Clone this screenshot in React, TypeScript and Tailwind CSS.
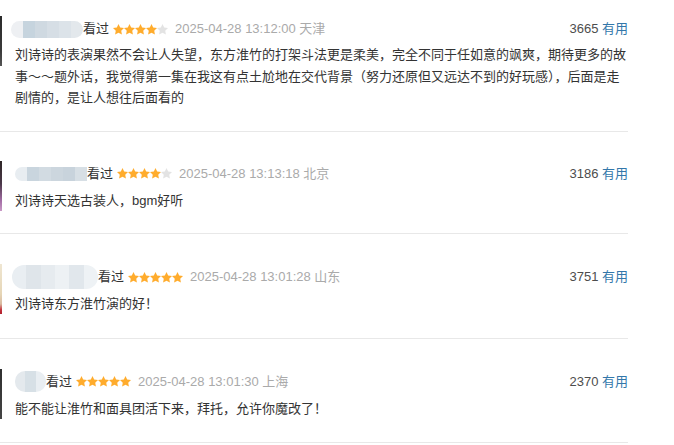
import React from "react";

type Row = {
  blob: { cls: string; colors: string[] };
  stars: number;
  date: string;
  loc: string;
  count: string;
  text: string;
  sliver: string;
  pad: string;
  mt: string;
};

const rows: Row[] = [
  {
    blob: {
      cls: "-ml-1 w-[72px] h-[17px] rounded-full",
      colors: ["#eef0f3", "#c6d4de", "#cfd9e1", "#d6dee5", "#dce3e9", "#e3e8ec"],
    },
    stars: 4,
    date: "2025-04-28 13:12:00",
    loc: "天津",
    count: "3665",
    text: "刘诗诗的表演果然不会让人失望，东方淮竹的打架斗法更是柔美，完全不同于任如意的飒爽，期待更多的故事～～题外话，我觉得第一集在我这有点土尬地在交代背景（努力还原但又远达不到的好玩感），后面是走剧情的，是让人想往后面看的",
    sliver: "bg-[linear-gradient(180deg,#2b2b2b_0%,#3a3a3a_70%,#555_100%)]",
    pad: "pt-[18px] pb-[22px]",
    mt: "mt-[4px]",
  },
  {
    blob: {
      cls: "w-[72px] h-[14px] rounded-l-full",
      colors: ["#e8edf1", "#c9d5de", "#d2dbe2", "#ccd6de", "#c8d3dc", "#d7dfe5"],
    },
    stars: 4,
    date: "2025-04-28 13:13:18",
    loc: "北京",
    count: "3186",
    text: "刘诗诗天选古装人，bgm好听",
    sliver: "bg-[linear-gradient(180deg,#2e2626_0%,#4a3848_45%,#a46ea6_80%,#c99ac6_100%)]",
    pad: "pt-[31px] pb-[22px]",
    mt: "mt-[5px]",
  },
  {
    blob: {
      cls: "-ml-[3px] w-[86px] h-[24px] rounded-full",
      colors: ["#e9eef2", "#dfe5ea", "#e6ebef", "#edf1f4", "#e1e7ec", "#eef2f5"],
    },
    stars: 5,
    date: "2025-04-28 13:01:28",
    loc: "山东",
    count: "3751",
    text: "刘诗诗东方淮竹演的好！",
    sliver: "bg-[linear-gradient(180deg,#efe6d2_0%,#e6d6b6_60%,#d9b9a0_80%,#c2303c_92%,#b0202c_100%)]",
    pad: "pt-[32px] pb-[23px]",
    mt: "mt-[5px]",
  },
  {
    blob: {
      cls: "w-[31px] h-[21px] rounded-[10px]",
      colors: ["#e4e9ed", "#d7e0e6", "#e9eef2"],
    },
    stars: 5,
    date: "2025-04-28 13:01:30",
    loc: "上海",
    count: "2370",
    text: "能不能让淮竹和面具团活下来，拜托，允许你魔改了！",
    sliver: "bg-[linear-gradient(180deg,#2f2f2f_0%,#444_100%)]",
    pad: "pt-[32px] pb-[23px]",
    mt: "mt-[5px]",
  },
];

function Star({ filled }: { filled: boolean }) {
  return (
    <svg width="11" height="11" viewBox="1.5 1.5 21 21" className="block">
      <path
        d="M12 1.5l3.2 6.6 7.3 1-5.3 5.1 1.3 7.2L12 18l-6.5 3.4 1.3-7.2L1.5 9.1l7.3-1z"
        fill={filled ? "#ffac2d" : "#e3e3e3"}
      />
    </svg>
  );
}

function Blob({ cls, colors }: { cls: string; colors: string[] }) {
  return (
    <div className={`flex shrink-0 overflow-hidden ${cls}`}>
      {colors.map((c, i) => (
        <div key={i} className="h-full flex-1" style={{ backgroundColor: c }} />
      ))}
    </div>
  );
}

export default function App() {
  return (
    <div className="min-h-[445px] w-[674px] bg-white font-[family-name:'Liberation_Sans','Noto_Sans_CJK_SC',sans-serif] text-[13px] text-[#333]">
      <div className="w-[628px]">
        {rows.map((r, i) => (
          <div key={i} className={`flex border-b border-[#e8e8e8] ${r.pad}`}>
            <div className={`-mt-[2px] h-[50px] w-[2px] shrink-0 ${r.sliver}`} />
            <div className="ml-[13px] flex-1">
              <div className="flex h-[22px] items-center whitespace-nowrap">
                <Blob cls={r.blob.cls} colors={r.blob.colors} />
                <span className="leading-[22px] text-[#333]">看过</span>
                <span className="ml-[4px] flex">
                  {[0, 1, 2, 3, 4].map((k) => (
                    <Star key={k} filled={k < r.stars} />
                  ))}
                </span>
                <span className="ml-[7px] text-[#aaa]">
                  {r.date} {r.loc}
                </span>
                <span className="ml-auto text-[#4d4d4d]">
                  {r.count} <span className="text-[#3377aa]">有用</span>
                </span>
              </div>
              <p className={`${r.mt} leading-[21.5px] text-[#333]`}>{r.text}</p>
            </div>
          </div>
        ))}
      </div>
    </div>
  );
}
